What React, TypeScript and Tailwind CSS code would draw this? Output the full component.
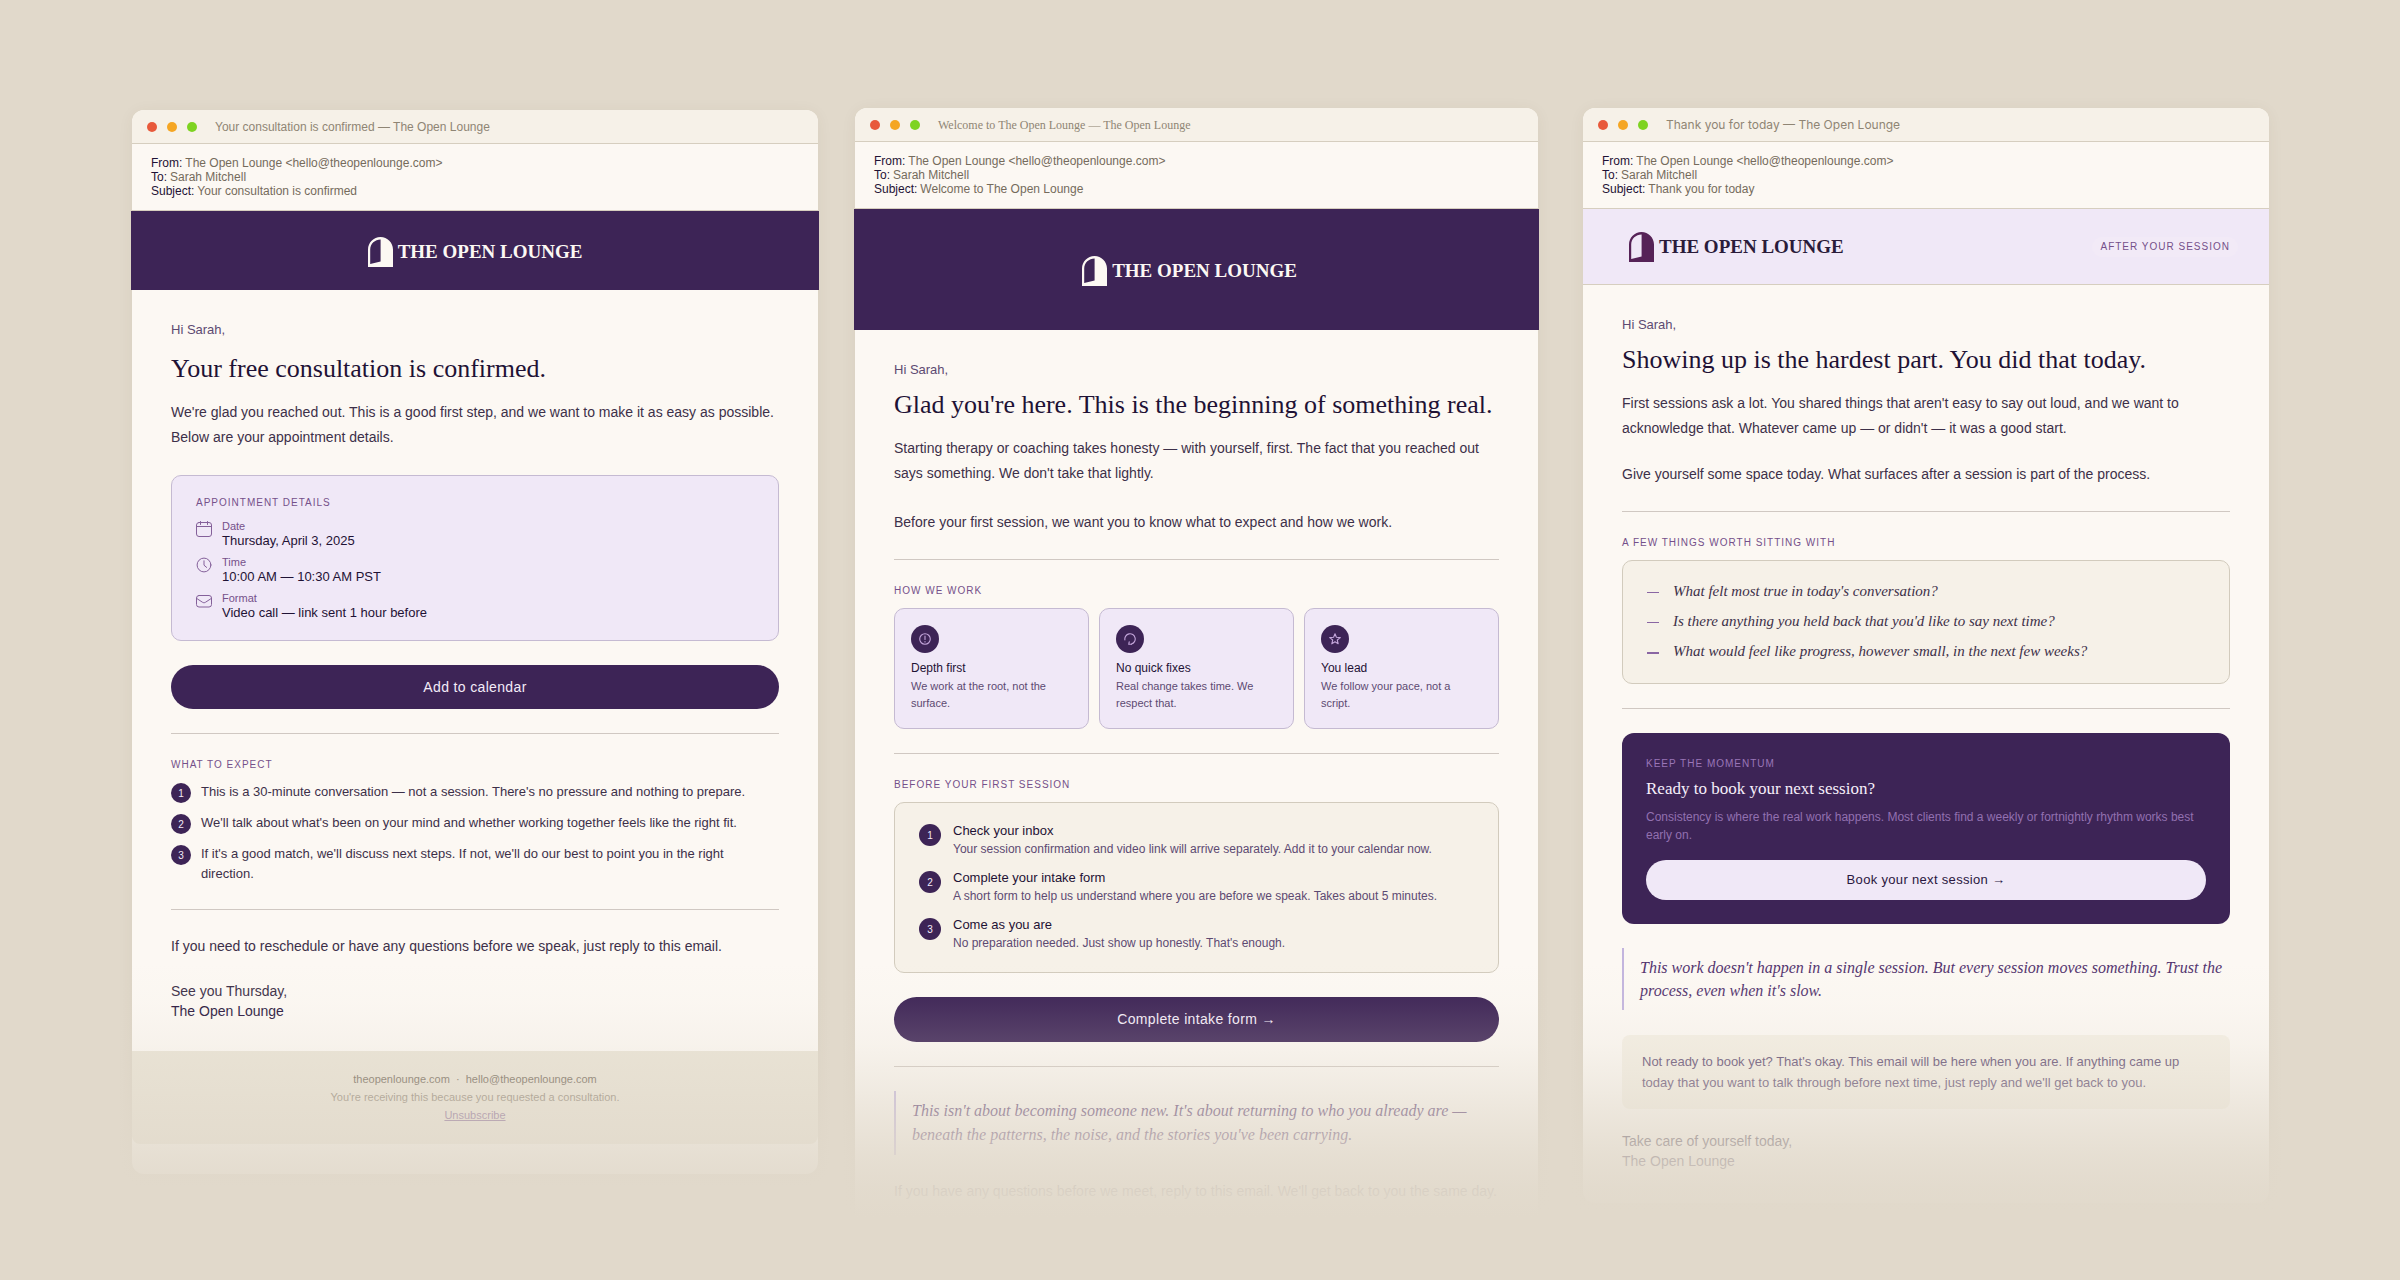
import type { ReactNode } from "react";
import clsx from "clsx";

function LogoMark({ className }: { className?: string }) {
  return (
    <svg viewBox="0 0 25 30" className={clsx("h-[30px] w-[25px]", className)} fill="currentColor" aria-hidden="true">
      <path
        fillRule="evenodd"
        d="M0 30V12.5C0 5.6 5.6 0 12.5 0S25 5.6 25 12.5V30H0ZM2.2 27L12.6 24.6V2.4C7 2.4 2.2 6.6 2.2 12.4V27Z"
      />
    </svg>
  );
}

function Logo({ dark = false }: { dark?: boolean }) {
  return (
    <div className="flex items-center gap-[5px]">
      <LogoMark className={dark ? "text-[#562257]" : "text-[#fcf8f3]"} />
      <span
        className={clsx(
          "font-['Liberation_Serif',serif] text-[19px] leading-[30px] font-bold",
          dark ? "text-[#2a1b3a]" : "text-[#fcf8f3]"
        )}
      >
        THE OPEN LOUNGE
      </span>
    </div>
  );
}

function CalendarIcon() {
  return (
    <svg viewBox="0 0 16 16" className="mt-px size-4 shrink-0" fill="none" stroke="currentColor" strokeLinecap="round">
      <rect x="0.5" y="1.5" width="15" height="14" rx="2.5" />
      <path d="M0.5 5.5H15.5M4.5 0.5V3.5M11.5 0.5V3.5" />
    </svg>
  );
}

function ClockIcon() {
  return (
    <svg viewBox="0 0 16 16" className="mt-px size-4 shrink-0" fill="none" stroke="currentColor" strokeLinecap="round">
      <circle cx="8" cy="8" r="6.9" />
      <path d="M8 3.8V8.2L10.6 10.4" />
    </svg>
  );
}

function MailIcon() {
  return (
    <svg viewBox="0 0 16 16" className="mt-px size-4 shrink-0" fill="none" stroke="currentColor" strokeLinecap="round">
      <rect x="0.5" y="2.5" width="15" height="11.5" rx="2.5" />
      <path d="M0.8 5.5L6.4 9.2C7.4 9.9 8.6 9.9 9.6 9.2L15.2 5.5" />
    </svg>
  );
}

function AlertGlyph() {
  return (
    <svg viewBox="0 0 12 12" className="size-3" fill="none" stroke="currentColor" strokeWidth="1.1" strokeLinecap="round">
      <circle cx="6" cy="6" r="5.3" />
      <path d="M6 3V6.4M6 8.6V8.9" />
    </svg>
  );
}

function LoopGlyph() {
  return (
    <svg viewBox="0 0 12 12" className="size-3" fill="none" stroke="currentColor" strokeWidth="1.1" strokeLinecap="round">
      <path d="M0.9 6.9A5.2 5.2 0 1 1 7.4 11" />
      <path d="M5.2 8.8L4.8 11.2L7.6 11.2" />
    </svg>
  );
}

function StarGlyph() {
  return (
    <svg viewBox="0 0 12 12" className="size-3" fill="none" stroke="currentColor" strokeWidth="1.1" strokeLinejoin="round">
      <path d="M6 0.8L7.4 4.3L11.3 4.6L8.3 7L9.2 10.8L6 8.7L2.8 10.8L3.7 7L0.7 4.6L4.6 4.3Z" />
    </svg>
  );
}

function EmailWindow({
  title,
  titleClass,
  subject,
  className,
  children,
}: {
  title: string;
  titleClass: string;
  subject: string;
  className?: string;
  children: ReactNode;
}) {
  const meta = [
    { label: "From:", value: "The Open Lounge <hello@theopenlounge.com>" },
    { label: "To:", value: "Sarah Mitchell" },
    { label: "Subject:", value: subject },
  ];

  return (
    <article className={clsx("rounded-xl bg-[#fcf8f3] shadow-[0_2px_16px_rgba(90,70,40,0.06)]", className)}>
      <div className="flex h-[34px] items-center rounded-t-xl border-b border-[#d6cebf] bg-[#f6f1e8] pl-[15px]">
        <div className="flex gap-[10px]">
          <span className="size-[10px] rounded-full bg-[#e8593b]" />
          <span className="size-[10px] rounded-full bg-[#f5a623]" />
          <span className="size-[10px] rounded-full bg-[#7ed321]" />
        </div>
        <span className={clsx("ml-[18px] leading-4 text-[#8f8574]", titleClass)}>{title}</span>
      </div>
      <dl className="border-b border-[#d6cebf] px-[19px] py-3 text-[12px] leading-[14px] text-[#756b5c]">
        {meta.map((row) => (
          <div key={row.label} className="flex gap-[3px]">
            <dt className="text-[#1f1235]">{row.label}</dt>
            <dd>{row.value}</dd>
          </div>
        ))}
      </dl>
      {children}
    </article>
  );
}

function Greeting() {
  return <p className="text-[13px] leading-4 text-[#5d4a72]">Hi Sarah,</p>;
}

function Title({ className, children }: { className?: string; children: ReactNode }) {
  return (
    <h1 className={clsx("font-['Liberation_Serif',serif] text-[26px] leading-[31px] text-[#1f1235]", className)}>
      {children}
    </h1>
  );
}

function Paragraph({ className, children }: { className?: string; children: ReactNode }) {
  return <p className={clsx("text-[14px] leading-[25px] text-[#3d3049]", className)}>{children}</p>;
}

function Eyebrow({ className, children }: { className?: string; children: ReactNode }) {
  return (
    <h2 className={clsx("text-[10px] leading-[14px] tracking-[1px] uppercase", className ?? "text-[#75508a]")}>
      {children}
    </h2>
  );
}

function Divider() {
  return <hr className="my-6 border-t border-[#d0c8c2]" />;
}

function Quote({ className, children }: { className?: string; children: ReactNode }) {
  return (
    <blockquote
      className={clsx(
        "border-l-2 border-[#c3b5de] py-2 pl-4 font-['Liberation_Serif',serif] text-[#54356f] italic",
        className
      )}
    >
      {children}
    </blockquote>
  );
}

function SignOff({ line, className }: { line: string; className?: string }) {
  return (
    <p className={clsx("text-[14px] leading-5 text-[#3d3049]", className)}>
      {line}
      <br />
      <span className="text-[#2a1740]">The Open Lounge</span>
    </p>
  );
}

const appointment = [
  { icon: CalendarIcon, label: "Date", value: "Thursday, April 3, 2025" },
  { icon: ClockIcon, label: "Time", value: "10:00 AM — 10:30 AM PST" },
  { icon: MailIcon, label: "Format", value: "Video call — link sent 1 hour before" },
];

const expectations = [
  "This is a 30-minute conversation — not a session. There's no pressure and nothing to prepare.",
  "We'll talk about what's been on your mind and whether working together feels like the right fit.",
  "If it's a good match, we'll discuss next steps. If not, we'll do our best to point you in the right direction.",
];

const principles = [
  { icon: AlertGlyph, title: "Depth first", text: "We work at the root, not the surface." },
  { icon: LoopGlyph, title: "No quick fixes", text: "Real change takes time. We respect that." },
  { icon: StarGlyph, title: "You lead", text: "We follow your pace, not a script." },
];

const steps = [
  {
    title: "Check your inbox",
    text: "Your session confirmation and video link will arrive separately. Add it to your calendar now.",
  },
  {
    title: "Complete your intake form",
    text: "A short form to help us understand where you are before we speak. Takes about 5 minutes.",
  },
  { title: "Come as you are", text: "No preparation needed. Just show up honestly. That's enough." },
];

const reflections = [
  "What felt most true in today's conversation?",
  "Is there anything you held back that you'd like to say next time?",
  "What would feel like progress, however small, in the next few weeks?",
];

function ConfirmationEmail() {
  return (
    <EmailWindow
      title="Your consultation is confirmed — The Open Lounge"
      titleClass="text-[12px]"
      subject="Your consultation is confirmed"
      className="mt-0.5 pb-[30px]"
    >
      <header className="-mx-px flex h-[79px] items-center justify-center bg-[#3d2456] pt-[3px]">
        <Logo />
      </header>
      <div className="px-[39px] pt-8 pb-[30px]">
        <Greeting />
        <Title className="mt-[15px]">Your free consultation is confirmed.</Title>
        <Paragraph className="mt-4">
          We're glad you reached out. This is a good first step, and we want to make it as easy as possible. Below are
          your appointment details.
        </Paragraph>

        <section className="mt-[25px] rounded-[10px] border border-[#c5bad2] bg-[#f0e8f7] px-6 py-5">
          <Eyebrow>Appointment details</Eyebrow>
          <dl className="mt-[10px] flex flex-col gap-2">
            {appointment.map((item) => (
              <div key={item.label} className="flex gap-[10px] text-[#84609a]">
                <item.icon />
                <div>
                  <dt className="text-[11px] leading-[13px] text-[#75508a]">{item.label}</dt>
                  <dd className="text-[13px] leading-[15px] text-[#1f1235]">{item.value}</dd>
                </div>
              </div>
            ))}
          </dl>
        </section>

        <button className="mt-6 h-11 w-full rounded-full bg-[#3d2456] text-[14px] tracking-wide text-[#f3ebf8]">
          Add to calendar
        </button>

        <Divider />

        <Eyebrow>What to expect</Eyebrow>
        <ol className="mt-[10px] flex flex-col gap-[10px] pb-px">
          {expectations.map((text, index) => (
            <li key={text} className="flex gap-[10px]">
              <span className="mt-px flex size-5 shrink-0 items-center justify-center rounded-full bg-[#3d2456] text-[10px] text-[#f3ebf8]">
                {index + 1}
              </span>
              <span className="text-[13px] leading-5 text-[#3d3049]">{text}</span>
            </li>
          ))}
        </ol>

        <Divider />

        <Paragraph>If you need to reschedule or have any questions before we speak, just reply to this email.</Paragraph>
        <SignOff line="See you Thursday," className="mt-[22px]" />
      </div>
      <footer className="rounded-b-lg bg-[#eae4d6] pt-[19px] pb-5 text-center text-[11px] leading-[18px] text-[#8a7f70]">
        <p className="text-[#6e6354]">theopenlounge.com &nbsp;·&nbsp; hello@theopenlounge.com</p>
        <p>You're receiving this because you requested a consultation.</p>
        <a href="#unsubscribe" className="text-[#7d5c8e] underline">
          Unsubscribe
        </a>
      </footer>
    </EmailWindow>
  );
}

function WelcomeEmail() {
  return (
    <EmailWindow
      title="Welcome to The Open Lounge — The Open Lounge"
      titleClass="font-['Liberation_Serif',serif] text-[12px]"
      subject="Welcome to The Open Lounge"
      className="pb-6"
    >
      <header className="-mx-px flex h-[121px] items-center justify-center bg-[#3d2456] pt-[3px] pr-[14px]">
        <Logo />
      </header>
      <div className="px-[39px] pt-8">
        <Greeting />
        <Title className="mt-[11px]">Glad you're here. This is the beginning of something real.</Title>
        <Paragraph className="mt-4">
          Starting therapy or coaching takes honesty — with yourself, first. The fact that you reached out says
          something. We don't take that lightly.
        </Paragraph>
        <Paragraph className="mt-6">
          Before your first session, we want you to know what to expect and how we work.
        </Paragraph>

        <Divider />

        <Eyebrow>How we work</Eyebrow>
        <div className="mt-[10px] grid grid-cols-3 gap-[10px]">
          {principles.map((item) => (
            <div key={item.title} className="rounded-[10px] border border-[#c5bad2] bg-[#f0e8f7] p-4">
              <div className="flex size-7 items-center justify-center rounded-full bg-[#3d2456] text-[#c3a5da]">
                <item.icon />
              </div>
              <h3 className="mt-2 text-[12px] leading-[14px] text-[#1f1235]">{item.title}</h3>
              <p className="mt-[3px] text-[11px] leading-[17px] text-[#5d4a72]">{item.text}</p>
            </div>
          ))}
        </div>

        <Divider />

        <Eyebrow>Before your first session</Eyebrow>
        <ol className="mt-[10px] flex flex-col gap-3 rounded-[10px] border border-[#d2cbbd] bg-[#f6f1e8] px-6 py-5">
          {steps.map((step, index) => (
            <li key={step.title} className="flex gap-3">
              <span className="mt-px flex size-[22px] shrink-0 items-center justify-center rounded-full bg-[#3d2456] text-[10px] text-[#f3ebf8]">
                {index + 1}
              </span>
              <div>
                <h3 className="text-[13px] leading-4 text-[#1f1235]">{step.title}</h3>
                <p className="mt-px text-[12px] leading-[18px] text-[#5d4a72]">{step.text}</p>
              </div>
            </li>
          ))}
        </ol>

        <button className="mt-6 h-[45px] w-full rounded-full bg-[#3d2456] text-[14px] tracking-wide text-[#f3ebf8]">
          Complete intake form →
        </button>

        <Divider />

        <Quote className="text-[16px] leading-6">
          This isn't about becoming someone new. It's about returning to who you already are — beneath the patterns, the
          noise, and the stories you've been carrying.
        </Quote>
        <Paragraph className="mt-6">
          If you have any questions before we meet, reply to this email. We'll get back to you the same day.
        </Paragraph>
      </div>
    </EmailWindow>
  );
}

function FollowUpEmail() {
  return (
    <EmailWindow
      title="Thank you for today — The Open Lounge"
      titleClass="font-[Inter,sans-serif] text-[12px]"
      subject="Thank you for today"
      className="ml-2 pb-8"
    >
      <header className="flex h-[76px] items-center justify-between border-b border-[#d6cebf] bg-[#f0e8f7] pt-px pr-[31px] pl-[46px]">
        <Logo dark />
        <span className="rounded-full bg-[#f2eaf7] px-2 text-[10px] leading-[20px] tracking-[1px] text-[#75508a]">
          AFTER YOUR SESSION
        </span>
      </header>
      <div className="px-[39px] pt-8">
        <Greeting />
        <Title className="mt-[11px]">Showing up is the hardest part. You did that today.</Title>
        <Paragraph className="mt-4">
          First sessions ask a lot. You shared things that aren't easy to say out loud, and we want to acknowledge that.
          Whatever came up — or didn't — it was a good start.
        </Paragraph>
        <Paragraph className="mt-[21px]">
          Give yourself some space today. What surfaces after a session is part of the process.
        </Paragraph>

        <Divider />

        <Eyebrow>A few things worth sitting with</Eyebrow>
        <ul className="mt-[10px] flex flex-col gap-[10px] rounded-[10px] border border-[#d2cbbd] bg-[#f6f1e8] px-6 pt-5 pb-[22px]">
          {reflections.map((text) => (
            <li key={text} className="group flex items-center gap-[14px]">
              <span className="mt-[3px] h-px w-3 bg-[#8a66a3] group-last:h-0.5" />
              <span className="font-['Liberation_Serif',serif] text-[15px] leading-5 text-[#3d3049] italic">
                {text}
              </span>
            </li>
          ))}
        </ul>

        <Divider />

        <section className="rounded-xl bg-[#3d2456] p-6">
          <Eyebrow className="text-[#9a76b8]">Keep the momentum</Eyebrow>
          <h3 className="mt-[6px] font-['Liberation_Serif',serif] text-[17px] leading-[23px] text-[#f6effa]">
            Ready to book your next session?
          </h3>
          <p className="mt-2 text-[12px] leading-[18px] text-[#9270b0]">
            Consistency is where the real work happens. Most clients find a weekly or fortnightly rhythm works best
            early on.
          </p>
          <button className="mt-4 h-10 w-full rounded-full bg-[#f0e8f7] text-[13px] tracking-wide text-[#2a1740]">
            Book your next session →
          </button>
        </section>

        <Quote className="mt-6 text-[16px] leading-[23px]">
          This work doesn't happen in a single session. But every session moves something. Trust the process, even when
          it's slow.
        </Quote>

        <p className="mt-[25px] rounded-lg bg-[#f4efe4] px-5 py-4 text-[13px] leading-[21px] text-[#5d4a72]">
          Not ready to book yet? That's okay. This email will be here when you are. If anything came up today that you
          want to talk through before next time, just reply and we'll get back to you.
        </p>
        <SignOff line="Take care of yourself today," className="mt-[22px]" />
      </div>
    </EmailWindow>
  );
}

export default function App() {
  return (
    <main className="relative min-h-screen bg-[#e1d9cb] pt-[108px] pr-[131px] pb-14 pl-[132px] font-['Liberation_Sans',sans-serif]">
      <div className="grid grid-cols-[686fr_683fr_694fr] items-start gap-[37px]">
        <ConfirmationEmail />
        <WelcomeEmail />
        <FollowUpEmail />
      </div>

      {/* bottom fade into the page background */}
      <div className="pointer-events-none absolute inset-x-0 bottom-0 h-[320px] bg-[linear-gradient(to_bottom,rgba(225,217,203,0)_0%,rgba(225,217,203,0.05)_12%,rgba(225,217,203,0.18)_25%,rgba(225,217,203,0.41)_38%,rgba(225,217,203,0.59)_47%,rgba(225,217,203,0.82)_60%,rgba(225,217,203,0.94)_70%,rgba(225,217,203,1)_79%)]" />
    </main>
  );
}
